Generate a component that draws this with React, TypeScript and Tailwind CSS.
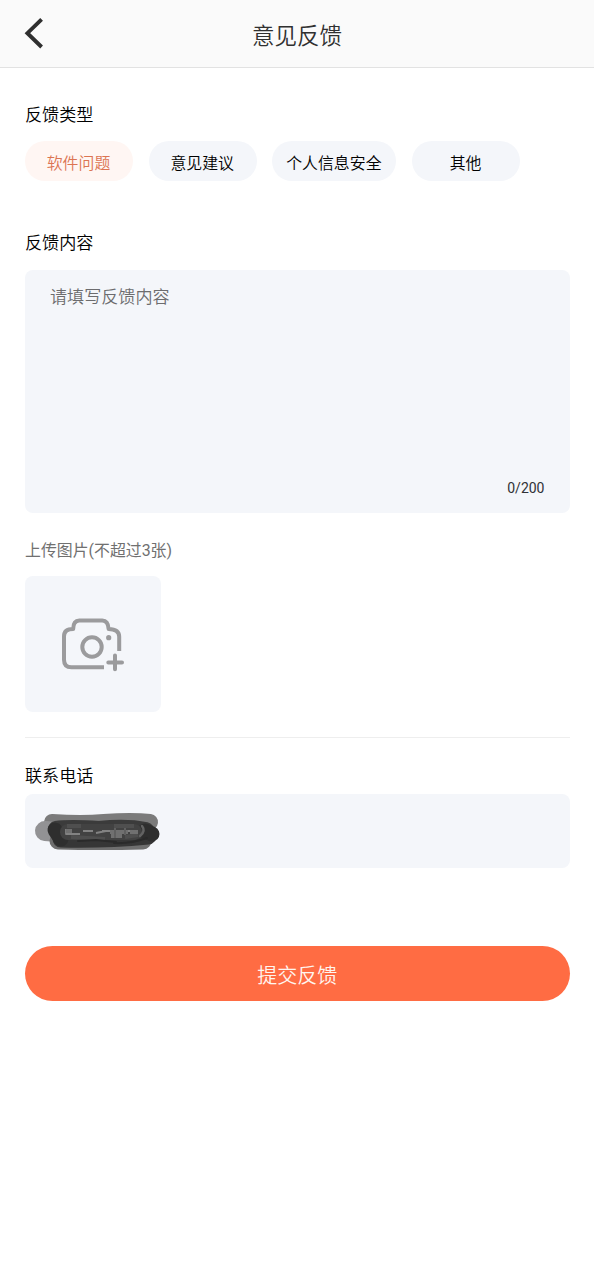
import { useState } from 'react';

const types = [
  { label: '软件问题', width: 'w-[108px]' },
  { label: '意见建议', width: 'w-[108px]' },
  { label: '个人信息安全', width: 'w-[124px]' },
  { label: '其他', width: 'w-[108px]' },
];

function BackIcon() {
  return (
    <svg width="20" height="32" viewBox="0 0 20 32" fill="none" stroke="#2f2f2f" strokeWidth="3.9">
      <path d="M17.6 1.4 3.4 15.2 17.6 29" />
    </svg>
  );
}

function CameraIcon() {
  return (
    <svg width="64" height="56" viewBox="0 0 64 56" fill="none" stroke="#9b9b9d" strokeWidth="4">
      <path d="M43 51.3H10.5Q3 51.3 3 43.8V20.2Q3 13 12.2 13Q12.2 4.4 18.3 4.4H41.3Q47.2 4.4 47.6 13Q58.2 13.2 58.2 20.7V35" strokeLinejoin="round" />
      <circle cx="31" cy="31" r="9.7" />
      <circle cx="47.7" cy="21.7" r="2.6" fill="#9b9b9d" stroke="none" />
      <path d="M54 39.5V53.3M47.3 46.4H61" strokeLinecap="round" />
    </svg>
  );
}

function RedactedNumber() {
  return (
    <svg width="128" height="40" viewBox="0 0 128 40" fill="none" strokeLinecap="round" strokeLinejoin="round">
      <path d="M18 11Q48 13 70 11Q98 9 116 11" stroke="#7b7b7b" strokeWidth="16" />
      <path d="M11 20 24 21" stroke="#929294" strokeWidth="20" />
      <path d="M24 30Q65 31 109 30" stroke="#6f6f6f" strokeWidth="17" />
      <path d="M22 18Q35 16 65 18Q92 15 112 19" stroke="#3b3b3b" strokeWidth="16" />
      <path d="M27 28Q72 29 114 25" stroke="#363636" strokeWidth="17" />
      <path d="M21 19 27 28M111 20 118 23" stroke="#2e2e2e" strokeWidth="15" />
      <path d="M34 21H100" stroke="#424242" strokeWidth="16" />
      <path d="M33 15H47M37 26 71 28M80 15H100M91 26 104 24" stroke="#4f4f4f" strokeWidth="4" strokeLinecap="butt" />
      <path d="M32 18V23H46M49 20H59M62 22 72 20M68 20H98" stroke="#828282" strokeWidth="1.8" strokeLinecap="butt" />
      <path d="M32 20H38M76 21H94M77 25H88M96 21H104" stroke="#707070" strokeWidth="4" strokeLinecap="butt" />
      <path d="M81 17V27M91 17V24" stroke="#606060" strokeWidth="2" strokeLinecap="butt" />
      <path d="M44 30 62 29 82 31M80 32Q96 33 113 27" stroke="#2a2a2a" strokeWidth="2" />
      <path d="M108 15Q112 20 106 25" stroke="#626262" strokeWidth="2.5" />
    </svg>
  );
}

export default function App() {
  const [selected, setSelected] = useState(0);
  const [content, setContent] = useState('');

  return (
    <div className="flex min-h-[1280px] w-full flex-col bg-white font-['Roboto','Noto_Sans_CJK_SC',sans-serif] font-[350] text-black">
      <header className="grid h-[68px] grid-cols-[1fr_auto_1fr] items-center border-b border-[#e2e2e2] bg-[#fafafa] px-6">
        <button aria-label="返回" className="w-5"><BackIcon /></button>
        <h1 className="pt-1 text-[22.5px] leading-8 font-[350] text-[#303030]">意见反馈</h1>
      </header>
      <main className="flex flex-col pt-[35px] pr-[24.5px] pl-[25px]">
        <h2 className="text-[17.1px] leading-6 font-[350]">反馈类型</h2>
        <div className="mt-[14px] flex gap-[15.7px]">
          {types.map((type, i) => (
            <button
              key={type.label}
              onClick={() => setSelected(i)}
              className={`h-10 rounded-full pt-[5px] pr-[7px] pl-1.5 text-[15.9px] leading-6 whitespace-nowrap ${type.width} ${i === selected ? 'bg-[#fff6f3] text-[#dc7452]' : 'bg-[#f4f6fa] text-black'}`}
            >
              {type.label}
            </button>
          ))}
        </div>

        <h2 className="mt-[50px] text-[17.1px] leading-6 font-[350]">反馈内容</h2>
        <div className="mt-[15px] flex h-[242.5px] flex-col rounded-lg bg-[#f4f6fa] px-[25px] pt-[15px] pb-[13px]">
          <textarea
            value={content}
            maxLength={200}
            onChange={(e) => setContent(e.target.value)}
            placeholder="请填写反馈内容"
            className="w-full flex-1 resize-none text-[17.1px] leading-6 outline-none placeholder:text-[#6c6c6e]"
          />
          <span className="text-right text-sm leading-6 font-normal text-[#303136]">{content.length}/200</span>
        </div>

        <p className="mt-[26.5px] text-[15.9px] leading-6 font-normal text-[#707070]">上传图片(不超过3张)</p>
        <button aria-label="上传图片" className="mt-[13px] flex size-[136px] items-center justify-center rounded-lg bg-[#f4f6fa]">
          <CameraIcon />
        </button>

        <div className="mt-[25px] border-t border-[#eeeeee]" />
        <h2 className="mt-[26px] text-[17.1px] leading-6 font-[350]">联系电话</h2>
        <div className="mt-[6px] flex h-[74px] items-center rounded-lg bg-[#f4f6fa] px-[9px]">
          <RedactedNumber />
        </div>
        <button className="mt-[78px] h-[55px] rounded-full bg-[#ff6c43] pt-[5px] text-xl leading-7 text-[#fff5ef]">提交反馈</button>
      </main>
    </div>
  );
}
